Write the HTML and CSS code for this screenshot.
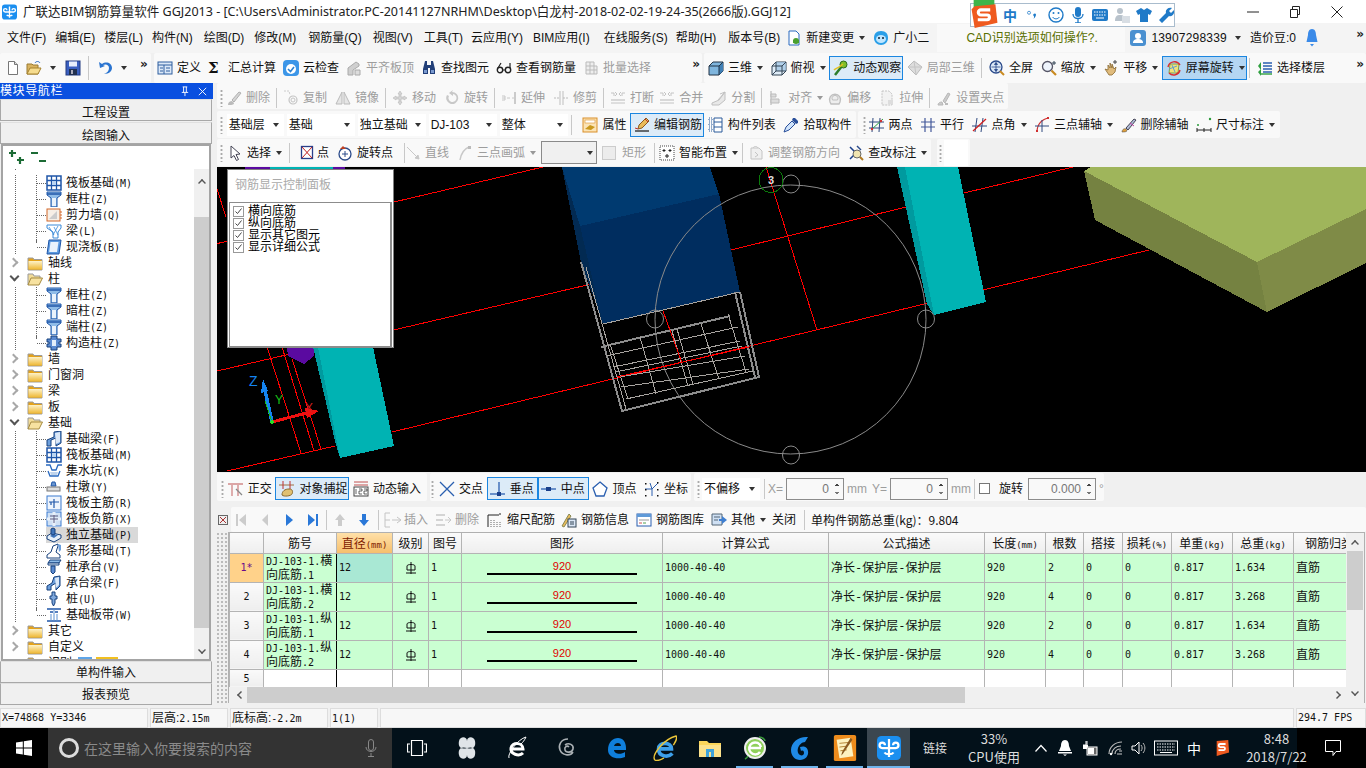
FILE: index.html
```html
<!DOCTYPE html>
<html lang="zh-CN">
<head>
<meta charset="utf-8">
<title>广联达BIM钢筋算量软件 GGJ2013</title>
<link rel="stylesheet" href="styles.css">
</head>
<body>
<svg class="defs" aria-hidden="true">
<defs>
<symbol id="app" viewBox="0 0 16 16"><rect width="16" height="16" rx="3" fill="#1b8ff0"/><path d="M8 2v12M8 8H3.500a1.800 1.800 0 1 1 1.800-1.800M8 8h4.500a1.800 1.800 0 1 0-1.800-1.800M5 11c1 1.500 5 1.500 6 0" fill="none" stroke="#fff" stroke-width="1.500"/></symbol>
<symbol id="new" viewBox="0 0 16 16"><path d="M3.500 1.500h6l3 3v10h-9z" fill="#fff" stroke="#777"/><path d="M9.500 1.500v3h3" fill="#ddd" stroke="#777"/></symbol>
<symbol id="open" viewBox="0 0 16 16"><path d="M1 14V4h5l1 1h5v9z" fill="#d9b360" stroke="#9a7a30"/><path d="M1 14l3-6h11l-3 6z" fill="#f6dc8e" stroke="#a5822f"/><path d="M9 3c1-2 4-2 5 0" fill="none" stroke="#2a6ac0"/></symbol>
<symbol id="save" viewBox="0 0 16 16"><rect x="1" y="1" width="14" height="14" fill="#3a5fc0" stroke="#223a80"/><rect x="4" y="1.500" width="8" height="5" fill="#e8eefc"/><rect x="4" y="9" width="8" height="6" fill="#20304f"/><rect x="6" y="10" width="2" height="4" fill="#aab"/></symbol>
<symbol id="undo" viewBox="0 0 16 16"><path d="M2 2l1 6 5-2-2-1c3-1.500 6 0 6 3s-2 5-5 6c5 0 8-3 8-6 0-5-6-7-10-4z" fill="#2a74d0"/></symbol>
<symbol id="def" viewBox="0 0 16 16"><rect x="1" y="2" width="14" height="12" fill="#dbe8f8" stroke="#2f5f9f"/><path d="M1 5h14M7 5v9M3 8h3M3 11h3M9 8h4M9 11h4" stroke="#2f5f9f"/></symbol>
<symbol id="cloud" viewBox="0 0 16 16"><rect x="0" y="0" width="16" height="16" rx="4" fill="#3c96e8"/><circle cx="8" cy="9" r="5" fill="#fff"/><path d="M5 9l2.500 2.500L11 7" fill="none" stroke="#2a80d0" stroke-width="1.600"/></symbol>
<symbol id="bld" viewBox="0 0 16 16"><path d="M2 15V8l8-6 3 2v2l-6 4v5z" fill="#cfcfcf" stroke="#aaa"/><path d="M9 15v-5h5v5z" fill="#ddd" stroke="#aaa"/></symbol>
<symbol id="binoc" viewBox="0 0 16 16"><path d="M4 1h2v4h4V1h2l2 8v5H9V8H7v6H2V9z" fill="#223f78"/><path d="M3 10h3v3H3zM10 10h3v3h-3z" fill="#7a9ad0"/></symbol>
<symbol id="look" viewBox="0 0 16 16"><circle cx="4" cy="10" r="2.700" fill="none" stroke="#222" stroke-width="1.400"/><circle cx="12" cy="10" r="2.700" fill="none" stroke="#222" stroke-width="1.400"/><path d="M6.500 10h3M2 8l3-5M14 8V3" stroke="#222" stroke-width="1.200" fill="none"/></symbol>
<symbol id="batch" viewBox="0 0 16 16"><path d="M3 2h8v4h3v8H3zM3 6h8M3 10h11M7 2v12M11 6v8" fill="#eee" stroke="#bbb"/></symbol>
<symbol id="cube" viewBox="0 0 16 16"><path d="M1 6l4-4h10v9l-4 4H1z" fill="#7fb5dd" stroke="#234"/><path d="M11 6l4-4v9l-4 4z" fill="#3f7fb5"/><path d="M1 6h10v9M11 6l4-4" fill="none" stroke="#234"/></symbol>
<symbol id="cubef" viewBox="0 0 16 16"><path d="M1 6l4-4h10v9l-4 4H1z" fill="#e0edf8" stroke="#345"/><path d="M5 2h10v9H5z" fill="#9cc3e4" opacity=".7"/><path d="M5 2v9h10M5 11l-4 4M1 6h10v9M11 6l4-4" fill="none" stroke="#345"/></symbol>
<symbol id="orbit" viewBox="0 0 16 16"><path d="M2 15l7-9" stroke="#2d7d2d" stroke-width="2.500"/><circle cx="10.500" cy="4.500" r="3.500" fill="#7fbf2a" stroke="#2d6d1d"/><path d="M1 10c2-2 5-2 9-6" stroke="#e2c020" fill="none" stroke-width="1.500"/></symbol>
<symbol id="loc3" viewBox="0 0 16 16"><path d="M1 7l6-6 8 6-6 8z" fill="#ddd" stroke="#bbb"/><path d="M7 1l2 14M1 7l14 0" stroke="#c4c4c4"/></symbol>
<symbol id="globe" viewBox="0 0 16 16"><circle cx="7" cy="7" r="6" fill="#dbe7f6" stroke="#2a4a8a" stroke-width="1.300"/><path d="M7 2.500v9M2.500 7h9M7 2.500L5.500 4.500h3zM7 11.500L5.500 9.500h3z" stroke="#2a4a8a" fill="#2a4a8a" stroke-width=".8"/><path d="M11 11l4 4" stroke="#c98a20" stroke-width="2"/></symbol>
<symbol id="mag" viewBox="0 0 16 16"><circle cx="6.500" cy="6.500" r="5" fill="#eef4fc" stroke="#556" stroke-width="1.300"/><path d="M10.500 10.500l4.500 4.500" stroke="#c98a20" stroke-width="2.200"/><path d="M13 1v4M11 3h4" stroke="#345"/></symbol>
<symbol id="pan" viewBox="0 0 16 16"><path d="M2 9l3 1V5l2 3V3l2 5V4l2 5 2-2-1 5-3 3H6z" fill="#e0bb7c" stroke="#8a6a30" stroke-width=".8"/><path d="M12 0v4M10 2h4" stroke="#444"/></symbol>
<symbol id="rot" viewBox="0 0 16 16"><path d="M4 4h9l-1 9H3z" fill="#f2e27a" stroke="#7fa04a"/><path d="M3 9l8-3M6 5l3 7" stroke="#5fa0d0"/><path d="M2 7A6.500 6.500 0 0 1 14 5M14 10A6.500 6.500 0 0 1 3 13" fill="none" stroke="#d93030" stroke-width="1.400"/></symbol>
<symbol id="floor" viewBox="0 0 16 16"><path d="M6 3h9M6 6h9M6 9h9M6 12h9" stroke="#2a5fb0" stroke-width="1.400"/><path d="M1 6l3-4v8zM1 12l3-3v7z" fill="#2fa040"/><path d="M4 14h11" stroke="#2fa040" stroke-width="1.400"/></symbol>
<symbol id="brush" viewBox="0 0 16 16"><path d="M2 15c0-3 2-4 4-4l2 2c0 2-3 2-6 2z" fill="#bbb"/><path d="M6 10l7-8 2 1-7 9z" fill="#d5d5d5" stroke="#b0b0b0"/></symbol>
<symbol id="copy" viewBox="0 0 16 16"><circle cx="10" cy="10" r="4" fill="none" stroke="#c4c4c4" stroke-width="1.200"/><circle cx="10" cy="10" r="2" fill="none" stroke="#c4c4c4"/><path d="M1 1h5l1 4" fill="none" stroke="#ccc" stroke-dasharray="2 1"/></symbol>
<symbol id="mirror" viewBox="0 0 16 16"><path d="M7 2L1 14h6zM9 2l6 12H9z" fill="#e6e6e6" stroke="#bbb"/></symbol>
<symbol id="move" viewBox="0 0 16 16"><path d="M8 1l2 3H9v3h3V6l3 2-3 2V9H9v3h1l-2 3-2-3h1V9H4v1L1 8l3-2v1h3V4H6z" fill="#d5d5d5" stroke="#bbb" stroke-width=".6"/></symbol>
<symbol id="rotg" viewBox="0 0 16 16"><path d="M8 2a6 6 0 1 1-5 3l2 1a4 4 0 1 0 4-2v2L5 3l4-3z" fill="#c8c8c8"/></symbol>
<symbol id="ext" viewBox="0 0 16 16"><path d="M14 2v12" stroke="#bbb" stroke-width="1.500"/><path d="M1 8h3M6 8h3M11 8h2M1 6h3v4H1" stroke="#c8c8c8" fill="none"/></symbol>
<symbol id="trim" viewBox="0 0 16 16"><path d="M7 1v14M10 1v14" stroke="#c8c8c8" stroke-width="1.200"/><path d="M1 8h6M10 8h5" stroke="#bbb" stroke-dasharray="2 1"/></symbol>
<symbol id="brk" viewBox="0 0 16 16"><path d="M1 3h3v3M15 3h-3v3M1 13h14M5 2l2 2-2 2M11 2L9 4l2 2" stroke="#c4c4c4" fill="none"/><path d="M1 10h14" stroke="#ccc" stroke-width="1.500"/></symbol>
<symbol id="split" viewBox="0 0 16 16"><path d="M1 13l7-3 6-8v8l-6 5H1z" fill="#e8e8e8" stroke="#c0c0c0"/><path d="M7 10l7-8M9 4l5-2" stroke="#c0c0c0"/></symbol>
<symbol id="aln" viewBox="0 0 16 16"><path d="M3 1v14" stroke="#bbb" stroke-width="1.200"/><path d="M3 4h5v3H3zM3 9h8v4H3z" fill="#ddd" stroke="#bbb"/></symbol>
<symbol id="ofs" viewBox="0 0 16 16"><path d="M3 12a5.500 5.500 0 1 1 10 0l-1 2H4z" fill="#eee" stroke="#c0c0c0" stroke-width="1.400"/><path d="M5.500 10a3 3 0 1 1 5 0z" fill="none" stroke="#c0c0c0"/></symbol>
<symbol id="str" viewBox="0 0 16 16"><path d="M3 1h7l3 3v11H3z" fill="#f2f2f2" stroke="#c4c4c4" stroke-dasharray="2 1"/><path d="M9 10h5v4H9z" fill="#ddd"/></symbol>
<symbol id="grip" viewBox="0 0 16 16"><path d="M2 15c0-2 2-3 4-3l1 3zM7 11l5-8 2 1-5 9z" fill="#ccc" stroke="#b8b8b8"/><rect x="9" y="13" width="3" height="2" fill="#bbb"/></symbol>
<symbol id="prop" viewBox="0 0 16 16"><rect x="1" y="1" width="14" height="14" fill="#fbe3b5" stroke="#d98f2a"/><rect x="3" y="3" width="10" height="3" fill="#fff" stroke="#d98f2a" stroke-width=".6"/><path d="M3 12l5-4 5 2-4 3z" fill="#c9981c"/></symbol>
<symbol id="edit" viewBox="0 0 16 16"><path d="M1 14h14" stroke="#222" stroke-width="1.300"/><path d="M4 12l1-4 7-7 3 3-7 7z" fill="#e9bb5a" stroke="#8b5a20"/><path d="M11 2l3 3" stroke="#c03030"/><path d="M1 11l3 1" stroke="#c03030"/></symbol>
<symbol id="list" viewBox="0 0 16 16"><path d="M1 1h3v3H1zM1 6h3v3H1zM1 11h3v3H1z" fill="#fff" stroke="#2a5a9a" stroke-dasharray="1 1"/><path d="M6 1h8v14H6z" fill="#fff" stroke="#2a5a9a"/><path d="M6 5h8M6 10h8" stroke="#2a5a9a"/></symbol>
<symbol id="pick" viewBox="0 0 16 16"><path d="M1 15l2-5 6-6 3 3-6 6z" fill="#cfe3fa" stroke="#2a4f9a"/><path d="M9 3l1-2 2 0 3 3 0 2-2 1z" fill="#2a4f9a"/></symbol>
<symbol id="twop" viewBox="0 0 16 16"><path d="M4 1l-1 14M11 1l-1 14M0 5h15M0 11h15" stroke="#304a80"/><path d="M2 13L14 2" stroke="#2aa040"/><circle cx="3" cy="12" r="1.200" fill="#d03030"/><circle cx="12" cy="4" r="1.200" fill="#d03030"/></symbol>
<symbol id="para" viewBox="0 0 16 16"><path d="M1 5h14M1 10h14M5 1v14M11 1v14" stroke="#43589a" stroke-width="1.200"/></symbol>
<symbol id="ang" viewBox="0 0 16 16"><path d="M5 1l-2 14M11 1L9 15M0 9h15" stroke="#304a80"/><path d="M1 14L14 2" stroke="#d02020" stroke-width="1.300"/></symbol>
<symbol id="arc3" viewBox="0 0 16 16"><path d="M3 15C3 7 8 2 15 1" fill="none" stroke="#d03030" stroke-width="1.200"/><path d="M8 3v12M1 9h14" stroke="#304a80"/><rect x="13" y="0" width="2" height="2" fill="#d03030"/><rect x="2" y="13" width="2" height="2" fill="#d03030"/></symbol>
<symbol id="delax" viewBox="0 0 16 16"><path d="M1 15c0-3 3-4 4-3l1 2c-1 1-3 1-5 1z" fill="#e0a03c" stroke="#444" stroke-width=".5"/><path d="M5 11l8-9 2 1-8 10z" fill="#b0bcd8" stroke="#445"/><path d="M9 6l4 3" stroke="#c040a0"/></symbol>
<symbol id="dim" viewBox="0 0 16 16"><path d="M1 13h14M1 11v4M15 11v4M8 11v4" stroke="#222"/><circle cx="2" cy="8" r="1" fill="#2a9a3a"/><circle cx="14" cy="2" r="1.200" fill="#2a9a3a"/></symbol>
<symbol id="sel" viewBox="0 0 16 16"><path d="M4 1l9 8-4 .5 2.500 5-2 1-2.500-5L4 13z" fill="#fff" stroke="#445"/></symbol>
<symbol id="pt" viewBox="0 0 16 16"><rect x="1.500" y="1.500" width="11" height="12" fill="#fff" stroke="#2a3f8a" stroke-width="1.300"/><path d="M2 2l10 11M12 2L2 13" stroke="#c02020"/></symbol>
<symbol id="rotp" viewBox="0 0 16 16"><circle cx="8" cy="9" r="6" fill="#fff" stroke="#2a4a8a" stroke-width="1.300"/><path d="M8 6v6M5 9h6" stroke="#2a4a8a"/><path d="M3 4l3-3 3 3z" fill="#c04020"/></symbol>
<symbol id="line" viewBox="0 0 16 16"><path d="M2 2l12 12M14 14l-4-1 3-3z" stroke="#c8c8c8" fill="#c8c8c8"/></symbol>
<symbol id="arc" viewBox="0 0 16 16"><path d="M3 15C4 9 7 4 12 2" fill="none" stroke="#c8c8c8" stroke-width="1.500"/><rect x="11" y="1" width="3" height="3" fill="#bbb"/></symbol>
<symbol id="smart" viewBox="0 0 16 16"><rect x="1" y="1" width="14" height="14" fill="#fff" stroke="#444" stroke-dasharray="1 1"/><path d="M5 4v3M3.500 5.500h3M11 4v3M9.500 5.500h3M8 9v4M6 11h4" stroke="#222"/></symbol>
<symbol id="adj" viewBox="0 0 16 16"><path d="M3 3h8l3 3v8H3z" fill="#f0f0f0" stroke="#c4c4c4"/><path d="M5 3c1-2 4-2 5 0M7 7l3 3-3 2" stroke="#c4c4c4" fill="none"/></symbol>
<symbol id="chk" viewBox="0 0 16 16"><path d="M2 2l5 5M2 14l5-5" stroke="#1a3f8a" stroke-width="1.500"/><circle cx="9" cy="9" r="4" fill="#f0e4b0" stroke="#666"/><path d="M12 12l3 3" stroke="#b07a20" stroke-width="2"/><path d="M9 1l4 4" stroke="#2a4a8a" stroke-width="1.500"/></symbol>
<symbol id="ortho" viewBox="0 0 16 16"><path d="M0 3h15M4 3v12M10 3v12" stroke="#dba5a5" stroke-width="1.800" fill="none"/><path d="M8 8l6 6" stroke="#888" stroke-width="1.300"/></symbol>
<symbol id="snap" viewBox="0 0 16 16"><path d="M0 4h15" stroke="#a07040"/><path d="M4 0v8M11 0v8" stroke="#c03030"/><path d="M3 14c0-4 3-6 7-6s4 3 3 5-8 3-10 1z" fill="#e0c070" stroke="#8a6a30"/></symbol>
<symbol id="dyn" viewBox="0 0 16 16"><path d="M1 1h14M1 4h14" stroke="#c05050"/><rect x="1" y="6" width="14" height="9" fill="#fff" stroke="#444"/><path d="M3 8v5M6 8h3v2H6v3h3M11 8h3v2h-3v3h3" stroke="#222" stroke-width=".7" fill="none"/></symbol>
<symbol id="xpt" viewBox="0 0 16 16"><path d="M1 1l14 14M15 1L1 15" stroke="#2a5fb0" stroke-width="1.300"/></symbol>
<symbol id="perp" viewBox="0 0 16 16"><path d="M9 1v13" stroke="#2a5fb0" stroke-width="1.300"/><path d="M0 13h15" stroke="#2a5fb0" stroke-width="1.300"/><rect x="7" y="11" width="4" height="4" fill="#1a3f8a"/></symbol>
<symbol id="mid" viewBox="0 0 16 16"><path d="M0 8h15" stroke="#2a5fb0" stroke-width="1.300"/><rect x="5" y="6" width="5" height="4" fill="#1a3f8a"/></symbol>
<symbol id="vtx" viewBox="0 0 16 16"><path d="M8 1l7 6-3 8H4L1 7z" fill="#fff" stroke="#2a5fb0" stroke-width="1.300"/></symbol>
<symbol id="coord" viewBox="0 0 16 16"><path d="M6 2l2 6 6-6M8 8v7M8 8H1" stroke="#2a5fb0" fill="none"/><g fill="#111"><rect x="1" y="2" width="1.500" height="1.500"/><rect x="1" y="8" width="1.500" height="1.500"/><rect x="1" y="14" width="1.500" height="1.500"/><rect x="13" y="1" width="1.500" height="1.500"/><rect x="13" y="8" width="1.500" height="1.500"/><rect x="13" y="14" width="1.500" height="1.500"/></g></symbol>
<symbol id="ins" viewBox="0 0 18 16"><path d="M1 1h5M1 1v14M1 8h5M1 15h5" stroke="#c4c4c4" fill="none"/><path d="M8 8h8M13 5l4 3-4 3" stroke="#c4c4c4" fill="none"/></symbol>
<symbol id="del2" viewBox="0 0 18 16"><path d="M1 3h9M1 8h7M1 13h9" stroke="#c8c8c8" stroke-width="1.400"/><path d="M10 8h6M13 5l3 3-3 3" stroke="#c8c8c8" fill="none"/></symbol>
<symbol id="scale" viewBox="0 0 16 16"><path d="M1 3h11M13 1v2M1 15V3" stroke="#222"/><path d="M4 15v-8M7 15V8M10 15V9M13 15v-5" stroke="#666" stroke-dasharray="1 1"/></symbol>
<symbol id="info" viewBox="0 0 16 16"><path d="M1 14l7-12 2 2-7 11z" fill="#e9bb5a" stroke="#885"/><rect x="7" y="7" width="8" height="8" fill="#dbe7f6" stroke="#345"/><path d="M9 10h4M9 12h4" stroke="#345"/></symbol>
<symbol id="lib" viewBox="0 0 16 16"><rect x="1" y="2" width="14" height="12" fill="#fff" stroke="#2a5fb0"/><rect x="1" y="2" width="14" height="3" fill="#5f9ad8"/><path d="M3 8h10" stroke="#999"/><path d="M3 11h3" stroke="#d05050"/><path d="M7 11h3" stroke="#50a050"/></symbol>
<symbol id="other" viewBox="0 0 16 16"><path d="M1 2h10v11H1z" fill="#cfe0f4" stroke="#567"/><path d="M3 5h6M3 8h4" stroke="#567"/><path d="M8 7h3V4l5 4-5 4V9H8z" fill="#3f7fd0"/></symbol>
<symbol id="raft" viewBox="0 0 16 16"><path d="M1 1h14v14H1z" fill="#fff" stroke="#1f56a8" stroke-width="1.500"/><path d="M1 5.500h14M1 10.500h14M5.500 1v14M10.500 1v14" stroke="#1f56a8" stroke-width="1.300"/><path d="M6 6h4v4H6z" fill="#bcd6f2"/></symbol>
<symbol id="col" viewBox="0 0 16 16"><path d="M1 1h14v3l-4 3v9H5V7L1 4z" fill="#8fbce8" stroke="#1f56a8"/><path d="M6 7h4v8H6z" fill="#eaf3fc"/><path d="M1 3h14" stroke="#1f56a8" stroke-width="1.500"/></symbol>
<symbol id="wall" viewBox="0 0 16 16"><rect x="1" y="2" width="13" height="12" fill="#f7efe6" stroke="#d2682a"/><path d="M3 12l8-8v8z" fill="#ccc"/><path d="M14 5h2M14 8h2M14 11h2" stroke="#d2682a"/></symbol>
<symbol id="beam" viewBox="0 0 16 16"><path d="M1 2h14v3l-3 4v6H7V9L1 5z" fill="#fff" stroke="#3a8ad8"/><path d="M3 4l5 8M8 4l4 8M12 3l-5 9" stroke="#3a8ad8" stroke-width=".8"/></symbol>
<symbol id="slab" viewBox="0 0 16 16"><path d="M3 1h12l-2 14H1z" fill="#5d9ae0" stroke="#1f56a8"/><path d="M4.500 3h8L11 13H3.200z" fill="#e9f2fc"/></symbol>
<symbol id="gzz" viewBox="0 0 16 16"><path d="M5 1h6v3h4v3h-2v2h2v3h-4v3H5v-3H1V9h2V7H1V4h4z" fill="#5b8ad0" stroke="#17407c"/><path d="M6 5h4v6H6z" fill="#e3eefa"/></symbol>
<symbol id="fbeam" viewBox="0 0 16 16"><path d="M1 15V9l7-3V1l7-1v12l-5 3V7L5 9v6z" fill="#6c9fdc" stroke="#17407c"/><path d="M9 2l5-1v10l-4 2z" fill="#dbe8f8"/></symbol>
<symbol id="pit" viewBox="0 0 16 16"><path d="M0 2h4l2 5h4l2-5h4M2 8l2 5h8l2-5" fill="none" stroke="#2a6ac0" stroke-width="1.300"/><path d="M4 9h8l-1 3H5z" fill="#c0d4ec"/></symbol>
<symbol id="pier" viewBox="0 0 16 16"><path d="M5 7l1-4h3l1 4z" fill="#6a96d0" stroke="#1f56a8"/><rect x="1" y="8" width="13" height="4" fill="#ddd" stroke="#777"/></symbol>
<symbol id="mbar" viewBox="0 0 16 16"><rect x="1" y="1" width="14" height="14" fill="#eef4fc" stroke="#3a7ad0"/><path d="M3 7h10M8 4v9M5 7v3" stroke="#1f56a8" stroke-width="1.200" fill="none"/></symbol>
<symbol id="nbar" viewBox="0 0 16 16"><rect x="1" y="1" width="14" height="14" fill="#cfe0f4" stroke="#3a7ad0"/><path d="M1 8h14M8 1v14" stroke="#e8f0fa" stroke-width="3"/><path d="M4 5h8M4 8h8M8 4v8" stroke="#5a5a80"/></symbol>
<symbol id="iso" viewBox="0 0 16 16"><path d="M1 9l5-3 9 2v3l-7 4-7-3z" fill="#e5eff9" stroke="#17407c"/><path d="M4 9l3-2 5 1-4 3z" fill="#3f75bb"/><path d="M5 7V2l2-1 2 1v5l-2 1z" fill="#3f75bb" stroke="#17407c"/></symbol>
<symbol id="strip" viewBox="0 0 16 16"><path d="M1 15v-3l4-3 2-6 5-2v2l-2 6 4 3v3z" fill="#fff" stroke="#17407c"/><path d="M12 1l3 1v5l-2 2z" fill="#6c9fdc"/></symbol>
<symbol id="capt" viewBox="0 0 16 16"><path d="M2 4l2-3h11l-2 3z" fill="#8fbce8" stroke="#17407c"/><path d="M2 4h11v2H2z" fill="#eaf3fc" stroke="#17407c"/><path d="M5 7h4v6l-2 2-2-2z" fill="#5b8ad0" stroke="#17407c"/></symbol>
<symbol id="capb" viewBox="0 0 16 16"><path d="M1 15v-4l5-3 2-6 6-1v10l-4 4V8L5 11v4z" fill="#6c9fdc" stroke="#17407c"/><path d="M9 3l4-1v8l-3 3z" fill="#dbe8f8"/></symbol>
<symbol id="pile" viewBox="0 0 16 16"><path d="M6 1h3v4h2v3H9v4l-1.500 3L6 12V8H4V5h2z" fill="#7fa8dc" stroke="#17407c"/></symbol>
<symbol id="band" viewBox="0 0 16 16"><path d="M1 2h14M1 14h14M4 5h3M9 5h3" stroke="#1f56a8" stroke-width="1.400"/><path d="M8 2v12M5 7v7M11 7v7" stroke="#5a90d0"/></symbol>
<symbol id="fold" viewBox="0 0 16 16"><path d="M1 3h5l1 1.500h8V15H1z" fill="#e4a21a" stroke="#9c9c9c"/><path d="M1.500 6h13.500v8.500H1.500z" fill="url(#fg)"/></symbol>
<symbol id="foldo" viewBox="0 0 16 16"><path d="M1 14V3h5l1 2h6v2" fill="#f2dc98" stroke="#999"/><path d="M1 14l3-7h11.500L12 14z" fill="#f7e2a0" stroke="#a58a40"/></symbol>
<symbol id="tick" viewBox="0 0 11 11"><rect x=".5" y=".5" width="10" height="10" fill="#fff" stroke="#999"/><path d="M2.500 5.500l2 2 4-5" fill="none" stroke="#444"/></symbol>
<symbol id="grade" viewBox="0 0 10 12"><path d="M5 0v12M1 4v4h8V4M1 4c0-2 8-2 8 0M0 11h10" fill="none" stroke="#111"/></symbol>
<linearGradient id="fg" x1="0" y1="0" x2="0" y2="1"><stop offset="0" stop-color="#fdf2c8"/><stop offset="1" stop-color="#eeb733"/></linearGradient>
</defs>
</svg>

<div class="app">
  <header class="titlebar">
    <svg class="appicon"><use href="#app"/></svg>
    <span class="title">广联达BIM钢筋算量软件 GGJ2013 - [C:\Users\Administrator.PC-20141127NRHM\Desktop\白龙村-2018-02-02-19-24-35(2666版).GGJ12]</span>
    <div class="winbtns">
      <svg class="wb" viewBox="0 0 12 12"><path d="M0 6h12" stroke="#222"/></svg>
      <svg class="wb" viewBox="0 0 12 12"><path d="M1.500 3.500h7v8h-7zM3.500 3V.5h7v8H9" fill="none" stroke="#222"/></svg>
      <svg class="wb" viewBox="0 0 12 12"><path d="M.5.500l11 11M11.500.500l-11 11" stroke="#222"/></svg>
    </div>
  </header>
  <div class="ime">
    <svg class="imes" viewBox="0 0 26 28"><rect x="3" y="0" width="20" height="8" fill="#3eb54a"/><path d="M4 6l20-2 2 18-22 5-3-18z" fill="#ef5a1f"/><path d="M19 9.500H10a1.500 1.500 0 0 0 0 5h6a2 2 0 0 1 0 4.500H7" fill="none" stroke="#fff" stroke-width="3"/></svg>
    <span class="imez">中</span>
    <svg class="imei p1" viewBox="0 0 16 16"><circle cx="4" cy="5" r="2" fill="none" stroke="#1f7ac8"/><path d="M12 6c2 0 2 4-2 7 1-2 1-3 0-4s0-3 2-3z" fill="#1f7ac8"/></svg>
    <svg class="imei" viewBox="0 0 16 16"><circle cx="8" cy="8" r="7" fill="none" stroke="#1f7ac8" stroke-width="1.400"/><circle cx="5.500" cy="6" r="1" fill="#1f7ac8"/><circle cx="10.500" cy="6" r="1" fill="#1f7ac8"/><path d="M4.500 10c2 2.500 5 2.500 7 0" fill="none" stroke="#1f7ac8"/></svg>
    <svg class="imei" viewBox="0 0 16 16"><rect x="5" y="0" width="6" height="10" rx="3" fill="#1f7ac8"/><path d="M3 7c0 6 10 6 10 0M8 12v4M5 16h6" fill="none" stroke="#1f7ac8" stroke-width="1.300"/></svg>
    <svg class="imei" viewBox="0 0 16 16"><rect x="0" y="2" width="16" height="12" rx="2" fill="#1f7ac8"/><path d="M2 5h12M2 8h12" stroke="#fff" stroke-dasharray="1.500 1"/><path d="M4 11h8" stroke="#fff"/></svg>
    <svg class="imei" viewBox="0 0 16 16"><circle cx="6" cy="4" r="3" fill="#b9c3cc"/><path d="M1 14c0-5 2-6 5-6s5 1 5 6z" fill="#b9c3cc"/><rect x="8" y="9" width="8" height="7" fill="#d8dee4"/></svg>
    <svg class="imei" viewBox="0 0 16 16"><path d="M5 1l3 2 3-2 5 3-2 4-2-1v8H4V7L2 8 0 4z" fill="#1f7ac8"/></svg>
    <svg class="imei" viewBox="0 0 16 16"><path d="M1 13l7-7c-1-3 2-6 6-5l-3 3 2 2 3-3c1 4-2 7-5 6l-7 7z" fill="#1f7ac8"/></svg>
  </div>

  <nav class="menubar">
    <span class="mi">文件(F)</span><span class="mi">编辑(E)</span><span class="mi">楼层(L)</span><span class="mi">构件(N)</span><span class="mi">绘图(D)</span><span class="mi">修改(M)</span><span class="mi">钢筋量(Q)</span><span class="mi">视图(V)</span><span class="mi">工具(T)</span><span class="mi">云应用(Y)</span><span class="mi">BIM应用(I)</span><span class="mi">在线服务(S)</span><span class="mi">帮助(H)</span><span class="mi">版本号(B)</span>
    <span class="ti news"><svg class="i" viewBox="0 0 16 16"><path d="M3 1h7l3 3v11H3z" fill="#fff" stroke="#2a6ac0"/><path d="M7 10h6v3h-6z" fill="#4aa030"/><circle cx="10" cy="11" r="3" fill="#4aa030"/></svg>新建变更<i class="ar"></i></span>
    <span class="ti guang"><svg class="i" viewBox="0 0 16 16"><path d="M8 1c5 0 7 3 7 7s-3 7-7 7-7-3-7-7 2-7 7-7z" fill="#2a9fe8"/><ellipse cx="8" cy="9" rx="5" ry="4" fill="#bfe6ff"/><circle cx="6" cy="8" r="1" fill="#123"/><circle cx="10" cy="8" r="1" fill="#123"/></svg>广小二</span>
    <span class="cadtip">CAD识别选项如何操作?.</span>
    <span class="ti user"><svg class="i" viewBox="0 0 16 16"><rect width="16" height="16" rx="3" fill="#4a90d0"/><circle cx="8" cy="6" r="3" fill="#fff"/><path d="M3 13c0-3 2-4 5-4s5 1 5 4z" fill="#fff"/></svg><span class="phone">13907298339</span><i class="ar"></i></span>
    <span class="bean">造价豆:0</span>
    <svg class="bell" viewBox="0 0 12 18"><path d="M6 0c3 0 4 3 4 6l1.500 7H.5L2 6c0-3 1-6 4-6z" fill="#3a8ae8"/><path d="M4 15h4l-2 2.500z" fill="#3a8ae8"/></svg>
    <b class="more">»</b>
  </nav>

  <div class="tb1">
    <div class="grp g1">
      <svg class="i"><use href="#new"/></svg><svg class="i"><use href="#open"/></svg><i class="ar"></i><svg class="i"><use href="#save"/></svg><i class="sep"></i><svg class="i"><use href="#undo"/></svg><i class="ar"></i><b class="more m1">»</b>
    </div>
    <div class="grp g2">
      <span class="ti"><svg class="i"><use href="#def"/></svg>定义</span>
      <span class="ti"><span class="i sigma">Σ</span>汇总计算</span>
      <span class="ti"><svg class="i"><use href="#cloud"/></svg>云检查</span>
      <span class="ti d"><svg class="i"><use href="#bld"/></svg>平齐板顶</span>
      <span class="ti"><svg class="i"><use href="#binoc"/></svg>查找图元</span>
      <span class="ti"><svg class="i"><use href="#look"/></svg>查看钢筋量</span>
      <span class="ti d"><svg class="i"><use href="#batch"/></svg>批量选择</span>
      <b class="more m2">»</b>
    </div>
    <div class="grp g3">
      <span class="ti"><svg class="i"><use href="#cube"/></svg>三维<i class="ar"></i></span>
      <span class="ti"><svg class="i"><use href="#cubef"/></svg>俯视<i class="ar"></i></span>
      <span class="ti on"><svg class="i"><use href="#orbit"/></svg>动态观察</span>
      <span class="ti d"><svg class="i"><use href="#loc3"/></svg>局部三维</span>
      <i class="sep"></i>
      <span class="ti"><svg class="i"><use href="#globe"/></svg>全屏</span>
      <span class="ti"><svg class="i"><use href="#mag"/></svg>缩放<i class="ar"></i></span>
      <span class="ti"><svg class="i"><use href="#pan"/></svg>平移<i class="ar"></i></span>
      <span class="ti on strong"><svg class="i"><use href="#rot"/></svg>屏幕旋转<i class="ar"></i></span>
      <i class="sep"></i>
      <span class="ti"><svg class="i"><use href="#floor"/></svg>选择楼层</span>
      <b class="more m3">»</b>
    </div>
  </div>

  <div class="workspace">
    <aside class="nav">
      <div class="navhead"><span class="navtitle">模块导航栏</span>
        <svg class="navbtn" viewBox="0 0 12 12"><path d="M4 1h5M5 1v6M8 1v6M3 7h7M6.500 7v4" stroke="#fff" fill="none"/></svg>
        <svg class="navbtn" viewBox="0 0 12 12"><path d="M2 2l8 8M10 2l-8 8" stroke="#fff"/></svg>
      </div>
      <button class="navb nt">工程设置</button>
      <button class="navb nt n2">绘图输入</button>
      <div class="treebox">
        <div class="treetools">
          <svg class="tt" viewBox="0 0 18 16"><path d="M4 1v7M1 4h7M12 8v7M9 11h7" stroke="#1c6b35" stroke-width="2.200"/></svg>
          <svg class="tt" viewBox="0 0 18 16"><path d="M1 4h7M9 12h7" stroke="#1c6b35" stroke-width="2.200"/></svg>
        </div>
        <div class="treebody">
          <ul class="tree">
            <li class="c"><svg class="ti16"><use href="#raft"/></svg>筏板基础<b>(M)</b></li>
            <li class="c"><svg class="ti16"><use href="#col"/></svg>框柱<b>(Z)</b></li>
            <li class="c"><svg class="ti16"><use href="#wall"/></svg>剪力墙<b>(Q)</b></li>
            <li class="c"><svg class="ti16"><use href="#beam"/></svg>梁<b>(L)</b></li>
            <li class="c last"><svg class="ti16"><use href="#slab"/></svg>现浇板<b>(B)</b></li>
            <li class="r"><i class="chev"></i><svg class="ti16"><use href="#fold"/></svg>轴线</li>
            <li class="r o"><i class="chev"></i><svg class="ti16"><use href="#foldo"/></svg>柱</li>
            <li class="c"><svg class="ti16"><use href="#col"/></svg>框柱<b>(Z)</b></li>
            <li class="c"><svg class="ti16"><use href="#col"/></svg>暗柱<b>(Z)</b></li>
            <li class="c"><svg class="ti16"><use href="#col"/></svg>端柱<b>(Z)</b></li>
            <li class="c last"><svg class="ti16"><use href="#gzz"/></svg>构造柱<b>(Z)</b></li>
            <li class="r"><i class="chev"></i><svg class="ti16"><use href="#fold"/></svg>墙</li>
            <li class="r"><i class="chev"></i><svg class="ti16"><use href="#fold"/></svg>门窗洞</li>
            <li class="r"><i class="chev"></i><svg class="ti16"><use href="#fold"/></svg>梁</li>
            <li class="r"><i class="chev"></i><svg class="ti16"><use href="#fold"/></svg>板</li>
            <li class="r o"><i class="chev"></i><svg class="ti16"><use href="#foldo"/></svg>基础</li>
            <li class="c"><svg class="ti16"><use href="#fbeam"/></svg>基础梁<b>(F)</b></li>
            <li class="c"><svg class="ti16"><use href="#raft"/></svg>筏板基础<b>(M)</b></li>
            <li class="c"><svg class="ti16"><use href="#pit"/></svg>集水坑<b>(K)</b></li>
            <li class="c"><svg class="ti16"><use href="#pier"/></svg>柱墩<b>(Y)</b></li>
            <li class="c"><svg class="ti16"><use href="#mbar"/></svg>筏板主筋<b>(R)</b></li>
            <li class="c"><svg class="ti16"><use href="#nbar"/></svg>筏板负筋<b>(X)</b></li>
            <li class="c sel"><svg class="ti16"><use href="#iso"/></svg><span class="st">独立基础<b>(P)</b></span></li>
            <li class="c"><svg class="ti16"><use href="#strip"/></svg>条形基础<b>(T)</b></li>
            <li class="c"><svg class="ti16"><use href="#capt"/></svg>桩承台<b>(V)</b></li>
            <li class="c"><svg class="ti16"><use href="#capb"/></svg>承台梁<b>(F)</b></li>
            <li class="c"><svg class="ti16"><use href="#pile"/></svg>桩<b>(U)</b></li>
            <li class="c last"><svg class="ti16"><use href="#band"/></svg>基础板带<b>(W)</b></li>
            <li class="r"><i class="chev"></i><svg class="ti16"><use href="#fold"/></svg>其它</li>
            <li class="r"><i class="chev"></i><svg class="ti16"><use href="#fold"/></svg>自定义</li>
            <li class="r rx"><svg class="ti16"><use href="#fold"/></svg>识别<i class="mini mb"></i><i class="mini my"></i></li>
          </ul>
          <div class="vs treevs"><i class="up"></i><i class="thumb"></i><i class="dn"></i></div>
        </div>
      </div>
      <button class="navb">单构件输入</button>
      <button class="navb">报表预览</button>
    </aside>

    <main class="main">
      <div class="tb tb2 grp">
        <i class="gr"></i>
        <span class="ti d"><svg class="i"><use href="#brush"/></svg>删除</span><i class="sep"></i>
        <span class="ti d"><svg class="i"><use href="#copy"/></svg>复制</span>
        <span class="ti d"><svg class="i"><use href="#mirror"/></svg>镜像</span><i class="sep"></i>
        <span class="ti d"><svg class="i"><use href="#move"/></svg>移动</span>
        <span class="ti d"><svg class="i"><use href="#rotg"/></svg>旋转</span><i class="sep"></i>
        <span class="ti d"><svg class="i"><use href="#ext"/></svg>延伸</span>
        <span class="ti d"><svg class="i"><use href="#trim"/></svg>修剪</span><i class="sep"></i>
        <span class="ti d"><svg class="i"><use href="#brk"/></svg>打断</span>
        <span class="ti d back3"><svg class="i"><use href="#brk"/></svg>合并</span>
        <span class="ti d"><svg class="i"><use href="#split"/></svg>分割</span><i class="sep"></i>
        <span class="ti d"><svg class="i"><use href="#aln"/></svg>对齐<i class="ar"></i></span>
        <span class="ti d back4"><svg class="i"><use href="#ofs"/></svg>偏移</span>
        <span class="ti d"><svg class="i"><use href="#str"/></svg>拉伸</span><i class="sep"></i>
        <span class="ti d"><svg class="i"><use href="#grip"/></svg>设置夹点</span>
      </div>

      <div class="tbrow r3">
        <div class="grp tb g31">
          <i class="gr"></i>
          <span class="combo c1">基础层<i class="ar"></i></span>
          <span class="combo">基础<i class="ar"></i></span>
          <span class="combo">独立基础<i class="ar"></i></span>
          <span class="combo">DJ-103<i class="ar"></i></span>
          <span class="combo">整体<i class="ar"></i></span>
          <i class="sep"></i>
          <span class="ti"><svg class="i"><use href="#prop"/></svg>属性</span>
          <span class="ti on"><svg class="i"><use href="#edit"/></svg>编辑钢筋</span>
          <span class="ti"><svg class="i"><use href="#list"/></svg>构件列表</span>
          <span class="ti"><svg class="i"><use href="#pick"/></svg>拾取构件</span>
        </div>
        <div class="grp tb g32">
          <i class="gr"></i>
          <span class="ti"><svg class="i"><use href="#twop"/></svg>两点</span>
          <span class="ti"><svg class="i"><use href="#para"/></svg>平行</span>
          <span class="ti"><svg class="i"><use href="#ang"/></svg>点角<i class="ar"></i></span>
          <span class="ti"><svg class="i"><use href="#arc3"/></svg>三点辅轴<i class="ar"></i></span>
          <span class="ti"><svg class="i"><use href="#delax"/></svg>删除辅轴</span>
          <span class="ti"><svg class="i"><use href="#dim"/></svg>尺寸标注<i class="ar"></i></span>
        </div>
      </div>

      <div class="tbrow r4">
        <div class="grp tb g41">
          <i class="gr"></i>
          <span class="ti"><svg class="i"><use href="#sel"/></svg>选择<i class="ar"></i></span><i class="sep"></i>
          <span class="ti s2"><svg class="i"><use href="#pt"/></svg>点</span>
          <span class="ti"><svg class="i"><use href="#rotp"/></svg>旋转点</span><i class="sep sb"></i>
          <span class="ti d"><svg class="i"><use href="#line"/></svg>直线</span>
          <span class="ti d"><svg class="i"><use href="#arc"/></svg>三点画弧<i class="ar"></i></span>
          <span class="combo c3"><i class="ar"></i></span>
          <span class="ti d"><i class="i rect"></i>矩形</span><i class="sep sc1"></i>
          <span class="ti"><svg class="i"><use href="#smart"/></svg>智能布置<i class="ar"></i></span><i class="sep sd"></i>
          <span class="ti d"><svg class="i"><use href="#adj"/></svg>调整钢筋方向</span>
          <span class="ti"><svg class="i"><use href="#chk"/></svg>查改标注<i class="ar"></i></span>
        </div>
        <div class="grp tb g42"><i class="gr"></i><span class="blank"></span></div>
      </div>

      <section class="canvas">
        <svg class="scene" viewBox="217 168 1149 305">
          <g class="red">
            <path d="M217 244.600L543 168"/>
            <path d="M217 372L600 283M731 251L906 208M964 194L1073 168"/>
            <path d="M227 472L335 447M392 433L1149 251"/>
            <path d="M766 168L817 331M663 312L682 364"/>
            <path d="M217 190L226 218M267 348L301 454M282 348L314 452M292 360L321 450"/>
          </g>
          <rect x="245" y="168" width="100" height="2" fill="#5a0aa0"/>
          <rect x="270" y="168" width="63" height="2" fill="#00b3b3"/>
          <path d="M287 348h27v9l-10 8-16-8z" fill="#5a0aa0"/>
          <path d="M313 348h60l21 99-54 12-5-17z" fill="#00b3b3"/>
          <path d="M313 348h5l22 111-5-17z" fill="#009a9f"/>
          <path d="M562 168l19 95 22 62 137-32-21-98-9-27z" fill="#002d5f"/>
          <path d="M562 168h148l9 27-139 32z" fill="#003a70"/>
          <path d="M562 168l18 59 23 98-22-62z" fill="#022a52"/>
          <path d="M897 168h61l28 135-52 13-7-11z" fill="#00b3b3"/>
          <path d="M897 168h8l29 148-7-11z" fill="#009a9f"/>
          <path d="M1084 172l7-4h275v42l-109 53z" fill="#9fb55b"/>
          <path d="M1084 172l173 91 10 50-172-92z" fill="#758241"/>
          <path d="M1257 263l109-53v54l-99 49z" fill="#7f8b47"/>
          <g class="cir">
            <ellipse cx="790.500" cy="320.500" rx="135.500" ry="134.500"/>
            <ellipse cx="791" cy="185" rx="8.500" ry="9"/>
            <ellipse cx="655" cy="320" rx="8.500" ry="9"/>
            <ellipse cx="926" cy="320" rx="8.500" ry="9"/>
            <ellipse cx="791" cy="456" rx="8.500" ry="9"/>
          </g>
          <ellipse cx="771" cy="181" rx="12" ry="12.500" fill="none" stroke="#0a7a0a"/>
          <text class="axis3" x="771" y="185">3</text>
          <g class="rebar thick">
            <path d="M581 263L622 412L759 378L740 293"/>
            <path d="M601 348L730 317"/>
            <path d="M735 293L755 378"/>
          </g>
          <g class="rebar">
            <path d="M603 325L740 293M586 268L626 410"/>
            <path d="M606 357L738 328M613 368L740 342M615 373L742 347M619 378L745 357M621 388L749 370M626 400L753 372"/>
            <path d="M610 345L628 400M640 338L656 395M672 332L688 387M677 330L693 385M701 325L719 380M728 315L746 373"/>
          </g>
          <path class="red" d="M663 312L682 364M617 378L749 348"/>
          <path d="M272 423L264 387" stroke="#1484f0" stroke-width="3.500"/>
          <path d="M263 380l5 12-7 2z" fill="#1484f0"/>
          <path d="M272 423L310 413" stroke="#f01010" stroke-width="3"/>
          <path d="M319 412l-12 7-2-10z" fill="#f01010"/>
          <path d="M272 423L265 402" stroke="#18c018"/>
          <circle cx="272" cy="423" r="1.800" fill="#28e028"/>
          <text class="ax axz" x="249" y="387">Z</text>
          <text class="ax axy" x="275" y="405">Y</text>
          <text class="ax axx" x="305" y="413">X</text>
        </svg>
        <div class="panel">
          <div class="paneltitle">钢筋显示控制面板</div>
          <ul class="panellist">
            <li><svg class="cb"><use href="#tick"/></svg>横向底筋</li>
            <li><svg class="cb"><use href="#tick"/></svg>纵向底筋</li>
            <li><svg class="cb"><use href="#tick"/></svg>显示其它图元</li>
            <li><svg class="cb"><use href="#tick"/></svg>显示详细公式</li>
          </ul>
        </div>
      </section>

      <div class="tbrow r5">
        <div class="grp tb g51">
          <i class="gr"></i>
          <span class="ti"><svg class="i"><use href="#ortho"/></svg>正交</span>
          <span class="ti on"><svg class="i"><use href="#snap"/></svg>对象捕捉</span>
          <span class="ti"><svg class="i"><use href="#dyn"/></svg>动态输入</span>
        </div>
        <div class="grp tb g52">
          <i class="gr"></i>
          <span class="ti"><svg class="i"><use href="#xpt"/></svg>交点</span>
          <span class="ti on pnt"><svg class="i"><use href="#perp"/></svg>垂点</span>
          <span class="ti on pnt"><svg class="i"><use href="#mid"/></svg>中点</span>
          <span class="ti"><svg class="i"><use href="#vtx"/></svg>顶点</span>
          <span class="ti"><svg class="i"><use href="#coord"/></svg>坐标</span>
        </div>
        <div class="grp tb g53">
          <i class="gr"></i>
          <span class="combo c4">不偏移<i class="ar"></i></span>
          <i class="sep"></i>
          <span class="lb d">X=</span><span class="spin"><span>0</span><i class="sp"></i></span><span class="lb d mm">mm</span>
          <span class="lb d">Y=</span><span class="spin"><span>0</span><i class="sp"></i></span><span class="lb d mm">mm</span>
          <i class="sep"></i>
          <i class="box"></i><span class="lb rotl">旋转</span>
          <span class="spin wide"><span>0.000</span><i class="sp"></i></span><span class="lb d">°</span>
        </div>
      </div>

      <div class="rebar-tb">
        <div class="x-strip"><svg class="xs" viewBox="0 0 10 10"><rect x=".5" y=".5" width="9" height="9" fill="#eee" stroke="#666"/><path d="M2 2l6 6M8 2L2 8" stroke="#a33"/></svg></div>
        <div class="grp tb g6">
          <svg class="pg" viewBox="0 0 12 14"><path d="M1 1h2v12H1zM11 1v12L4 7z" fill="#ccc"/></svg>
          <svg class="pg" viewBox="0 0 12 14"><path d="M9 1v12L3 7z" fill="#ccc"/></svg>
          <svg class="pg" viewBox="0 0 12 14"><path d="M3 1v12l7-6z" fill="#2a78d8"/></svg>
          <svg class="pg" viewBox="0 0 12 14"><path d="M1 1v12l7-6zM9 1h2v12H9z" fill="#2a78d8"/></svg>
          <i class="sep s61"></i>
          <svg class="pg" viewBox="0 0 12 14"><path d="M6 1l5 6H8v6H4V7H1z" fill="#ccc"/></svg>
          <svg class="pg" viewBox="0 0 12 14"><path d="M6 13l5-6H8V1H4v6H1z" fill="#2a78d8"/></svg>
          <i class="sep s62"></i>
          <span class="ti d tight"><svg class="i ii"><use href="#ins"/></svg>插入</span>
          <span class="ti d tight back1"><svg class="i ii"><use href="#del2"/></svg>删除</span>
          <span class="ti"><svg class="i"><use href="#scale"/></svg>缩尺配筋</span>
          <span class="ti back2"><svg class="i"><use href="#info"/></svg>钢筋信息</span>
          <span class="ti back1"><svg class="i"><use href="#lib"/></svg>钢筋图库</span>
          <span class="ti back1"><svg class="i"><use href="#other"/></svg>其他<i class="ar"></i></span>
          <span class="ti back2">关闭</span>
          <i class="sep s63"></i>
          <span class="total">单构件钢筋总重(kg)：9.804</span>
        </div>
      </div>

      <div class="gridarea">
        <div class="dots"></div>
        <div class="gridbox">
          <div class="gridclip">
          <table class="rt">
            <colgroup>
              <col class="w34"><col class="w73"><col class="w56"><col class="w36"><col class="w33"><col class="w201"><col class="w166"><col class="w156"><col class="w61"><col class="w38"><col class="w39"><col class="w49"><col class="w61"><col class="w61"><col class="w53">
            </colgroup>
            <thead>
              <tr>
                <th></th><th>筋号</th><th class="hsel">直径<small>(mm)</small></th><th>级别</th><th>图号</th><th>图形</th><th>计算公式</th><th>公式描述</th><th>长度<small>(mm)</small></th><th>根数</th><th>搭接</th><th>损耗<small>(%)</small></th><th>单重<small>(kg)</small></th><th>总重<small>(kg)</small></th><th class="cut"><div class="cutin">钢筋归类</div></th>
              </tr>
            </thead>
            <tbody>
              <tr>
                <th class="rn rsel">1*</th><td class="nm"><span class="m">DJ-103-1.</span>横向底筋<span class="m">.1</span></td><td class="m cursel">12</td><td class="ct"><svg class="gr3"><use href="#grade"/></svg></td><td class="m">1</td><td class="shape"><span>920</span></td><td class="m">1000-40-40</td><td class="fx">净长-保护层-保护层</td><td class="m">920</td><td class="m">2</td><td class="m">0</td><td class="m">0</td><td class="m">0.817</td><td class="m">1.634</td><td>直筋</td>
              </tr>
              <tr>
                <th class="rn">2</th><td class="nm"><span class="m">DJ-103-1.</span>横向底筋<span class="m">.2</span></td><td class="m">12</td><td class="ct"><svg class="gr3"><use href="#grade"/></svg></td><td class="m">1</td><td class="shape"><span>920</span></td><td class="m">1000-40-40</td><td class="fx">净长-保护层-保护层</td><td class="m">920</td><td class="m">4</td><td class="m">0</td><td class="m">0</td><td class="m">0.817</td><td class="m">3.268</td><td>直筋</td>
              </tr>
              <tr>
                <th class="rn">3</th><td class="nm"><span class="m">DJ-103-1.</span>纵向底筋<span class="m">.1</span></td><td class="m">12</td><td class="ct"><svg class="gr3"><use href="#grade"/></svg></td><td class="m">1</td><td class="shape"><span>920</span></td><td class="m">1000-40-40</td><td class="fx">净长-保护层-保护层</td><td class="m">920</td><td class="m">2</td><td class="m">0</td><td class="m">0</td><td class="m">0.817</td><td class="m">1.634</td><td>直筋</td>
              </tr>
              <tr>
                <th class="rn">4</th><td class="nm"><span class="m">DJ-103-1.</span>纵向底筋<span class="m">.2</span></td><td class="m">12</td><td class="ct"><svg class="gr3"><use href="#grade"/></svg></td><td class="m">1</td><td class="shape"><span>920</span></td><td class="m">1000-40-40</td><td class="fx">净长-保护层-保护层</td><td class="m">920</td><td class="m">4</td><td class="m">0</td><td class="m">0</td><td class="m">0.817</td><td class="m">3.268</td><td>直筋</td>
              </tr>
              <tr class="empty">
                <th class="rn">5</th><td class="nm"></td><td></td><td></td><td></td><td></td><td></td><td></td><td></td><td></td><td></td><td></td><td></td><td></td><td></td>
              </tr>
            </tbody>
          </table>
          </div>
          <div class="vs gridvs"><i class="up"></i><i class="thumb"></i><i class="dn"></i></div>
          <div class="hs"><i class="lf"></i><i class="thumb"></i><i class="rg"></i></div>
        </div>
      </div>
    </main>
  </div>

  <footer class="status">
    <span class="sc s1c">X=74868 Y=3346</span>
    <span class="sc s2c">层高:<em>2.15m</em></span>
    <span class="sc s3c">底标高:<em>-2.2m</em></span>
    <span class="sc s4c"><em>1(1)</em></span>
    <span class="sc s5c"></span>
    <span class="sc s6c">294.7 FPS</span>
  </footer>

  <div class="taskbar">
    <div class="start"><svg class="win" viewBox="0 0 16 16"><path d="M0 2.500L6.800 1.500v6H0zM7.800 1.300L16 0v7.500H7.800zM0 8.500h6.800v6L0 13.500zM7.800 8.500H16V16l-8.200-1.300z" fill="#fff"/></svg></div>
    <div class="search"><i class="cortana"></i><span class="ph">在这里输入你要搜索的内容</span>
      <svg class="mic" viewBox="0 0 12 18"><rect x="3.500" y=".5" width="5" height="11" rx="2.500" fill="none" stroke="#888"/><path d="M1 8c0 6 10 6 10 0M6 14v3M3 17.500h6" fill="none" stroke="#888"/></svg>
    </div>
    <span class="ts tw"><svg class="t1" viewBox="0 0 20 18"><path d="M4.500 1.500h11v15h-11zM3 5H.5v8H3M17 5h2.500v8H17" fill="none" stroke="#fff" stroke-width="1.200"/></svg></span>
    <span class="ts tw"><svg class="t2" viewBox="0 0 22 24"><path d="M11 12C4 14 2 10 3 5s8-5 8 0zM11 12c7 2 9-2 8-7s-8-5-8 0zM11 12c-7-2-9 2-8 7s8 5 8 0zM11 12c7-2 9 2 8 7s-8 5-8 0z" fill="#dfe4e8"/></svg></span>
    <span class="ts tw"><svg class="t2" viewBox="0 0 22 24"><path d="M4 13h13c0-7-11-7-12-1s8 9 12 5" fill="none" stroke="#fff" stroke-width="3"/><path d="M3 22C1 18 12 3 20 1c-2 4-3 5-5 7" fill="none" stroke="#fff"/></svg></span>
    <span class="ts tw"><svg class="t2" viewBox="0 0 22 24"><path d="M12 3c-7 0-10 6-8 11s10 7 13 2M9 9c4-3 9 0 8 4s-7 4-8 1 2-5 4-3" fill="none" stroke="#aab0b4" stroke-width="1.600"/></svg></span>
    <span class="ts tw"><svg class="t2" viewBox="0 0 22 24"><path d="M2 14C2 6 7 2 12 2s8 4 8 10v2H8c0 4 7 5 11 2v5c-7 3-17 1-17-7zM8 10h7c0-4-6-4-7 0z" fill="#0f7fdc"/></svg></span>
    <span class="ts"><svg class="t3" viewBox="0 0 26 28"><path d="M6 15h14c0-8-14-8-14 0s10 10 15 5" fill="none" stroke="#3da0ea" stroke-width="4"/><path d="M2 27C-2 22 12 4 25 1c2 3-1 7-3 10M2 27c3 2 7-1 10-2" fill="none" stroke="#ecc63a" stroke-width="1.500"/></svg></span>
    <span class="ts"><svg class="t3" viewBox="0 0 24 22"><path d="M1 20V4h8l2 2h12v14z" fill="#fbd65a"/><path d="M1 8h22v12H1z" fill="#fce28c"/><path d="M8 20v-8h8v8h-3v-5h-2v5z" fill="#3fa3dc"/></svg></span>
    <span class="ts"><svg class="t3" viewBox="0 0 24 26"><circle cx="12" cy="13" r="10" fill="#8fd05a" stroke="#eee" stroke-width="2"/><path d="M6 13h12M17 17a6 6 0 1 1 1-5" stroke="#fff" stroke-width="2.500" fill="none"/><path d="M16 2c4 0 6 3 6 4M2 24c2-1 3-3 3-3" stroke="#3a9a3a" stroke-width="1.500" fill="none"/></svg></span>
    <span class="ts"><svg class="t3" viewBox="0 0 24 26"><path d="M20 2c-9-1-17 5-17 13 0 6 4 10 9 10s9-4 8-9-5-5-8-4l1 4c2-1 3 0 3 2s-2 3-4 2-3-4-2-7 4-6 7-6z" fill="#1f8ae6"/></svg></span>
    <span class="ts"><svg class="t3" viewBox="0 0 24 28"><rect x="0" y="0" width="24" height="28" rx="2" fill="#ee8c1c"/><path d="M3 5l15-2 3 20-15 2z" fill="#fdf2c0"/><path d="M6 9l10-1M6 13l8-1M7 17l7-1" stroke="#b08030"/><path d="M20 5L10 20l-2 2 1-4L18 3z" fill="#8a5a20"/></svg></span>
    <span class="ts act"><svg class="t3" viewBox="0 0 16 16"><use href="#app"/></svg></span>
    <div class="tray">
      <span class="tl">链接</span>
      <span class="cpu"><span>33%</span><span>CPU使用</span></span>
      <svg class="sy w12" viewBox="0 0 12 8"><path d="M.5 7.500L6 1.500l5.500 6" fill="none" stroke="#fff" stroke-width="1.200"/></svg>
      <svg class="sy w14" viewBox="0 0 14 16"><path d="M7 0c3 0 4 3 4 6l2 5H1l2-5c0-3 1-6 4-6z" fill="#fff"/><rect x="0" y="12" width="14" height="1.500" fill="#fff"/><path d="M5 14.500h4L7 16z" fill="#fff"/></svg>
      <svg class="sy w16" viewBox="0 0 16 16"><path d="M1 5h3v-4M5 5V1" stroke="#fff" fill="none"/><rect x="1" y="5" width="5" height="4" fill="#fff"/><rect x="5" y="7" width="10" height="8" fill="#666" stroke="#fff"/><rect x="6" y="8" width="6" height="6" fill="#fff"/></svg>
      <svg class="sy w16" viewBox="0 0 16 16"><g fill="none" stroke="#bbb" stroke-width="1.200"><path d="M1 14C1 7 7 2 14 2"/><path d="M4 14c0-5 4-8 9-8"/><path d="M7 14c0-3 2-5 6-5"/></g><circle cx="3" cy="14" r="1.200" fill="#fff"/><path d="M9 14h5M11 11h3" stroke="#ccc"/></svg>
      <svg class="sy w16" viewBox="0 0 16 16"><path d="M1 6h3l4-4v12l-4-4H1z" fill="none" stroke="#fff"/><path d="M10 5c1.500 2 1.500 4 0 6M12 3c2.500 3 2.500 7 0 10" fill="none" stroke="#bbb"/></svg>
      <svg class="sy w24" viewBox="0 0 24 16"><rect x=".5" y="1" width="23" height="14" fill="none" stroke="#fff"/><path d="M3 4h18M3 7h18M3 10h18" stroke="#fff" stroke-dasharray="1.500 1"/><path d="M6 12.500h12" stroke="#fff"/></svg>
      <span class="tl zh">中</span>
      <svg class="sy w16" viewBox="0 0 16 18"><path d="M2 1l13-1 1 14-14 4z" fill="#ee5a20"/><path d="M12 4.500H6a1.500 1.500 0 0 0 0 3.500h4a1.800 1.800 0 0 1 0 3.500H4" fill="none" stroke="#fff" stroke-width="2"/></svg>
      <span class="clock"><span>8:48</span><span>2018/7/22</span></span>
      <svg class="sy w16 nt2" viewBox="0 0 16 16"><path d="M.5.500h15v11H11l-3 4v-4H.5z" fill="none" stroke="#fff"/></svg>
    </div>
  </div>
</div>
</body>
</html>
```
FILE: styles.css
```css
*{box-sizing:border-box}
html,body{margin:0;padding:0}
body{width:1366px;height:768px;overflow:hidden;background:#f0f0f0;font:12px/16px "Liberation Sans","Noto Sans CJK SC",sans-serif;color:#111}
ul{list-style:none;margin:0;padding:0}
i,em{font-style:normal}
.defs{position:absolute;width:0;height:0}
.app{width:1366px;height:768px;display:flex;flex-direction:column;position:relative}

/* title */
.titlebar{height:23px;background:#fff;display:flex;align-items:center;padding-left:2px}
.appicon{width:15px;height:16px;flex:none}
.title{margin-left:6px;font-family:"Noto Sans","Noto Sans CJK SC",sans-serif;font-size:12.530px;white-space:nowrap;color:#222}
.winbtns{margin-left:auto;display:flex;align-items:center;gap:30px;padding-right:23px}
.wb{width:12px;height:12px;display:block}
.ime{position:absolute;left:970px;top:3px;width:205px;height:24px;background:#fff;border:1px solid #a9bccd;display:flex;align-items:center;padding-left:32px;gap:6px;z-index:3}
.imes{position:absolute;left:-1px;top:-4px;width:28px;height:29px}
.imez{color:#1f7ac8;font:bold 14px/16px "Noto Sans CJK SC",sans-serif;width:15px}
.imei{width:16px;height:16px;flex:none}
.imei.p1{width:12px;margin:0 4px 0 2px}

/* menu */
.menubar{height:30px;display:flex;align-items:center;background:#f4f4f4;padding-left:7px;flex:none}
.mi{margin-right:9px;white-space:nowrap}
.mi:nth-child(4){margin-right:11px}
.mi:nth-child(5){margin-right:10px}
.mi:nth-child(6){margin-right:12px}
.mi:nth-child(7),.mi:nth-child(8){margin-right:11px}
.mi:nth-child(9){margin-right:8px}
.mi:nth-child(10){margin-right:10px}
.mi:nth-child(11){margin-right:14px}
.mi:nth-child(12){margin-right:8px}
.mi:nth-child(13){margin-right:12px}
.mi:nth-child(14){margin-right:7px}
.news{margin-left:-1px}
.guang{margin-left:8px}
.cadtip{margin-left:8px;width:188px;height:28px;background:#f9f9f9;color:#5a7000;line-height:28px;padding-left:29px;white-space:nowrap}
.user{margin-left:5px;gap:5px!important}
.phone{letter-spacing:.2px}
.user .ar{margin-left:3px}
.bean{margin-left:9px}
.bell{width:12px;height:18px;margin-left:10px}
.more{font:bold 12px/12px "DejaVu Sans",sans-serif;color:#222;white-space:nowrap}
.menubar .more{margin-left:auto;margin-right:2px;margin-top:-8px}

/* toolbars */
.tb1{height:30px;display:flex;flex:none;align-items:stretch;background:#f0f0f0}
.grp{background:#f9f9f9;display:flex;align-items:center;border-radius:2px;white-space:nowrap}
.g1{width:151px;padding-left:5px;gap:0;position:relative}
.g1 .i{margin-right:5px}
.g1 .ar{margin:0 9px 0 3px}
.g1 .sep{height:24px;margin:0 8px 0 2px}
.m1{margin-left:4px;margin-top:-8px}
.g2{width:548px;margin-left:3px;padding-left:3px;gap:7px}
.m2{margin-left:auto;margin-right:2px;margin-top:-8px}
.g3{width:662px;margin-left:2px;padding-left:4px;gap:7.600px}
.g3 .sep{margin:0 -1px}
.m3{margin-left:auto;margin-right:2px;margin-top:-8px}
.ti{display:inline-flex;align-items:center;gap:4px;height:24px;white-space:nowrap;flex:none}
.i{width:16px;height:16px;flex:none;display:block}
.ii{width:18px}
.d{color:#9d9d9d}
.sigma{font:bold 15px/16px "DejaVu Serif",serif;color:#111}
.ar{display:inline-block;width:0;height:0;border:3px solid transparent;border-top:4px solid #333;border-bottom:0;margin-left:1px;flex:none}
.d .ar{border-top-color:#999}
.sep{width:1px;height:20px;background:#c8c8c8;margin:0 -2px;flex:none;display:block}
.gr{width:3px;height:18px;flex:none;display:block;background:radial-gradient(circle,#aaa 1px,transparent 1.200px) 0 0/3px 4px}
.on{border:1px solid #1b86e0;background:#dcebf8;margin:0 -4px;padding:0 1px 0 3px;height:24px}
.strong{background:#b4d6f3}
.tb{height:27px;padding-left:3px}
.back1{margin-left:-1px}
.back2{margin-left:-2px}
.back3{margin-left:-3px}
.back4{margin-left:-4px}
.workspace{flex:1;display:flex;min-height:0}
.main{width:1149px;margin-left:4px;display:flex;flex-direction:column;flex:none}
.tb2{width:791px;gap:8px;flex:none;height:26px;margin-bottom:2px;color:#999;padding-top:4px}
.tb2 .gr{margin-right:-5px}
.tbrow{display:flex;flex:none;height:28px;gap:2px}
.g31{width:639px;padding-left:3px;gap:7.700px}
.g32{width:422px;padding-left:5px;gap:7.500px}
.g31 .gr{margin-right:-4px}
.g32 .gr{margin-right:-5px}
.combo{height:22px;width:68px;background:#fff;display:inline-flex;align-items:center;justify-content:space-between;padding:0 5px 0 2px;flex:none;margin-right:-4.700px}
.combo .ar{margin-left:0}
.c1{width:57px}
.g31 .combo:last-of-type{margin-right:0}
.g31 .sep{margin:0 3px 0 0}
.g41{width:714px;gap:8px;padding-left:3px}
.g42{width:33px;margin-left:4px;padding-left:2px;gap:2px}
.g42 .gr{flex:none}
.blank{width:24px;height:26px;background:#fff;display:block}
.g41 .gr{margin-right:-4px}
.g41 .sep{margin:0 -1px}
.g41 .sb{margin:0 -8px 0 3px}
.g41 .sc1{margin:0 -4px 0 0}
.g41 .sd{margin:0 -3px 0 -4px}
.s2{margin-left:3px;gap:1px}
.c3{width:56px;height:23px;background:#f0f0f0;border:1px solid #8a8a8a;justify-content:flex-end;margin:0 -3px;padding-right:3px}
.rect{background:#ececec;border:1px solid #ccc;height:14px;width:14px;margin-right:2px}

/* canvas */
.canvas{height:305px;background:#000;position:relative;overflow:hidden;flex:none}
.scene{width:1149px;height:305px;display:block;shape-rendering:crispEdges}
.red path,path.red{fill:none;stroke:#ff0000;stroke-width:1}
.cir ellipse{fill:none;stroke:#8a8a8a;stroke-width:1;shape-rendering:auto}
.rebar path{fill:none;stroke:#a8a4a0;stroke-width:1}
.rebar.thick path{stroke:#8d8d8d;stroke-width:2}
.axis3{font:bold 11px "Liberation Sans",sans-serif;fill:#ddd;text-anchor:middle}
.ax{font:11px "Liberation Sans",sans-serif}
.axz{fill:#1484f0;font-size:14px}.axy{fill:#18c018;font-size:12px}.axx{fill:#d02020;font-size:12px}
.panel{position:absolute;left:10px;top:2px;width:167px;height:179px;background:#fff;border:1px solid #808080;padding:1px}
.paneltitle{height:31px;line-height:28px;padding-left:6px;color:#aaa}
.panellist{height:146px;border:solid #8c8c8c;border-width:1px 2px 2px 1px;padding:2px 0 0 3px;color:#000}
.panellist li{height:12px;line-height:12px;display:flex;align-items:center;font-size:12px;white-space:nowrap}
.cb{width:11px;height:11px;margin-right:4px;flex:none}

/* snap bar */
.r5{height:31px;padding:1px 0 2px;gap:3px}
.r5 .tb{height:28px;padding-top:3px}
.g51{width:210px;padding-left:4px;gap:7.700px}
.g51 .gr{margin-right:-4px}
.r5 .on{height:23px}
.g52{width:261px;padding-left:1px;gap:7.700px}
.g52 .gr{margin-right:-2.700px}
.pnt{margin:0 -4px;padding:0 3px 0 2px;width:51px}
.pnt + .pnt{margin-left:-3.700px}
.g53{width:410px;padding-left:3px;gap:3px}
.g53 .gr{margin-right:-1px}
.c4{width:58px;margin-right:1px}
.g53 .sep{margin:0}
.g53 .mm{width:22px}
.g53 .mm + .sep{margin-left:-2px}
.lb{white-space:nowrap}
.spin{width:58px;height:22px;border:1px solid #8c8c8c;display:flex;align-items:center;justify-content:flex-end;gap:4px;color:#777;padding-right:2px}
.wide{width:68px}
.sp{width:8px;height:16px;display:block;background:linear-gradient(#444,#444) 3px 3px/2px 1px no-repeat,linear-gradient(#444,#444) 2px 4px/4px 1px no-repeat,linear-gradient(#777,#777) 2px 11px/4px 1px no-repeat,linear-gradient(#777,#777) 3px 12px/2px 1px no-repeat}
.box{width:11px;height:11px;border:1px solid #777;background:#fff;display:block;margin-left:1px}
.rotl{margin:0 2px 0 6px}

/* rebar toolbar */
.rebar-tb{display:flex;flex:none;height:29px;padding-top:4px}
.x-strip{width:14px;padding:8px 0 0 1px;flex:none}
.xs{width:10px;height:10px;display:block}
.g6{width:1135px;height:25px;padding-left:4px;gap:8px}
.pg{width:12px;height:14px;flex:none;margin-right:4px}
.g6 .s61{margin:0 -1px 0 -5px}
.g6 .s62{margin:0 -3px 0 -4px}
.g6 .s63{margin:0 -2px 0 0}
.g6 .ti{height:22px}
.tight{gap:2px}
.total{font-family:"Noto Sans CJK SC",sans-serif}

/* table */
.gridarea{display:flex;flex:none;height:171px}
.dots{width:11px;flex:none;background:radial-gradient(circle,#bbb 1px,transparent 1.200px) 3px 0/4px 4px}
.gridbox{width:1137px;height:171px;border:1px solid #b0b0b0;background:#f0f0f0;display:grid;grid-template-columns:1117px 18px;grid-template-rows:154px 16px;flex:none}
.gridclip{overflow:hidden;height:154px;background:#fff}
.rt{table-layout:fixed;border-collapse:collapse;width:1117px}
.w34{width:34px}.w73{width:73px}.w56{width:56px}.w36{width:36px}.w33{width:33px}.w201{width:201px}.w166{width:166px}.w156{width:156px}.w61{width:61px}.w38{width:38px}.w39{width:39px}.w49{width:49px}.w53{width:53px}
.rt th,.rt td{border:1px solid #b4b4b4;padding:0 0 0 2px;font-weight:normal;overflow:hidden;white-space:nowrap}
.rt thead tr{height:20px}
.rt thead th{background:linear-gradient(#fafafa,#eee);text-align:center;padding:2px 0 0;border-top:0;line-height:16px}
.rt small{font:9px "DejaVu Sans Mono",monospace}
.rt .hsel{background:linear-gradient(#ffe0a8,#f6bf6c);color:#802000}
.rt .cut{text-align:left;padding-left:11px}
.cutin{width:41px;overflow:hidden}
.rt tbody tr{height:29px}
.rt tbody tr.empty{height:18px}
.rt tbody td{background:#caffd2}
.rt .empty td{background:#fff;border-bottom:0}
.rt .rn{background:linear-gradient(#fafafa,#eee);text-align:center;padding:0;font:10px "DejaVu Sans Mono",monospace}
.rt .rsel{background:#ffd28a;color:#6a0a8a}
.rt .m,.rt .nm .m{font:10px "DejaVu Sans Mono",monospace}
.rt .nm{white-space:normal;line-height:14px;padding:0 2px;word-break:break-all;border-right:1px solid #000}
.rt .cursel{background:#a9e8d4}
.rt .fx{font-family:"DejaVu Sans Mono","Noto Sans CJK SC",monospace}
.ct{text-align:center;padding:0!important}
.gr3{width:10px;height:12px;display:inline-block;vertical-align:middle}
.shape{text-align:center;padding:0!important;position:relative}
.shape span{display:block;width:150px;margin:-1px auto 0;height:15px;border-bottom:2px solid #000;color:#e00000;font:11px/13px "Liberation Sans",sans-serif}
.vs{position:relative;background:#f0f0f0;display:block}
.treevs{width:15px;flex:none;height:100%}
.gridvs{grid-column:2;grid-row:1 / 3;width:18px}
.vs .up,.vs .dn{position:absolute;left:50%;margin-left:-4px;width:8px;height:8px;border:solid #555;border-width:2px 0 0 2px;transform:rotate(45deg) scale(.7)}
.vs .up{top:7px}
.vs .dn{bottom:7px;transform:rotate(225deg) scale(.7)}
.treevs .up{top:10px}
.treevs .dn{bottom:5px}
.vs .thumb{position:absolute;left:0;right:0;background:#cdcdcd}
.treevs .thumb{top:48px;bottom:31px}
.gridvs .thumb{top:18px;height:59px;left:1px;right:1px}
.hs{grid-column:1;grid-row:2;position:relative;background:#f0f0f0}
.hs .lf,.hs .rg{position:absolute;top:4px;width:8px;height:8px;border:solid #555;border-width:2px 0 0 2px;transform:rotate(-45deg) scale(.7)}
.hs .lf{left:8px}
.hs .rg{right:5px;transform:rotate(135deg) scale(.7)}
.hs .thumb{position:absolute;left:18px;width:718px;top:0;bottom:0;background:#cdcdcd}

/* navigation */
.nav{width:213px;flex:none;display:flex;flex-direction:column;padding-bottom:3px}
.navhead{height:16px;background:#0a50e0;color:#fff;display:flex;align-items:center;padding-right:5px;flex:none}
.navtitle{margin-right:auto;letter-spacing:.6px}
.navbtn{width:11px;height:11px;margin-left:7px}
.navb{height:22px;flex:none;width:212px;border:1px solid #a8a8a8;border-top-color:#e0e0e0;background:#f0f0f0;font:12px/20px "Noto Sans CJK SC",sans-serif;color:#111;padding:0;margin:0}
.nt{padding-top:2px}
.n2{margin-top:1px}
.treebox{flex:1;min-height:0;border:2px solid #a4a4a4;background:#fff;margin:0 2px 0 1px;display:flex;flex-direction:column;overflow:hidden}
.treetools{height:23px;display:flex;align-items:flex-start;padding:3px 0 0 5px;gap:4px;flex:none}
.tt{width:18px;height:16px}
.treebody{flex:1;display:flex;min-height:0;overflow:hidden}
.tree{flex:1;overflow:hidden;padding-top:6px;font-size:12px;height:100%;background:linear-gradient(#666 50%,transparent 50%) 12px 0/1px 2px no-repeat}
.tree li{height:16px;line-height:16px;position:relative;white-space:nowrap;display:flex;align-items:center}
.tree b{font:10px "DejaVu Sans Mono",monospace}
.ti16{width:16px;height:16px;flex:none}
.tree .c{padding-left:43px;background:linear-gradient(#666 50%,transparent 50%) 12px 0/1px 2px repeat-y,linear-gradient(#666 50%,transparent 50%) 33px 0/1px 2px repeat-y}
.tree .c.last{background:linear-gradient(#666 50%,transparent 50%) 12px 0/1px 2px repeat-y,linear-gradient(#666 50%,transparent 50%) 33px 0/1px 8px no-repeat}
.tree .c::before{content:"";position:absolute;left:34px;top:8px;width:9px;height:1px;background:linear-gradient(90deg,#666 50%,transparent 50%) 0 0/2px 1px}
.tree .c .ti16{margin-right:4px}
.tree .r{padding-left:24px}
.tree .r .ti16{margin-right:5px}
.chev{position:absolute;left:7px;top:4px;width:7px;height:7px;border:solid #a8a8a8;border-width:2px 2px 0 0;transform:rotate(45deg)}
.o .chev{border-color:#555;transform:rotate(135deg);left:8px;top:2px}
.mini{display:block;width:14px;height:12px;flex:none;margin-left:4px}
.mb{background:#5fa5e8;margin-left:6px}
.my{background:#f2c020;width:22px}
.sel .ti16{background:#d8d8d8;margin-right:0!important}
.st{background:#d9d9d9;height:16px;padding:0 6px 0 4px;display:block}

/* status */
.status{height:20px;display:flex;gap:2px;flex:none;background:#f0f0f0}
.sc{height:20px;background:#f7f7f7;border:1px solid #ddd;font-size:12px;line-height:18px;padding-left:1px;white-space:nowrap;flex:none}
.sc em,.s1c,.s6c{font:10px/18px "DejaVu Sans Mono",monospace}
.s1c{width:148px}.s2c{width:78px}.s3c{width:98px}.s4c{width:48px}.s5c{width:914px}.s6c{width:70px}

/* taskbar */
.taskbar{height:40px;flex:none;display:flex;align-items:center;color:#ddd;background:linear-gradient(90deg,#03111a 1297px,#000 1297px)}
.start{width:48px;height:40px;background:#000;display:flex;align-items:center;justify-content:center;flex:none}
.win{width:16px;height:16px}
.search{width:344px;height:40px;background:#333;display:flex;align-items:center;padding-left:11px;flex:none}
.cortana{width:20px;height:20px;border-radius:50%;border:3px solid #ddd;display:block;flex:none}
.ph{margin-left:5px;font:14px/20px "Noto Sans CJK SC",sans-serif;color:#8a8a8a}
.mic{width:12px;height:18px;margin-left:auto;margin-right:15px}
.ts{width:45px;height:40px;display:flex;align-items:center;justify-content:center;flex:none;position:relative}
.tw{width:50px}
.t1{width:20px;height:18px}.t2{width:22px;height:24px}.t3{width:24px;height:26px}
.ts:nth-of-type(n+8)::after{content:"";position:absolute;left:4px;right:4px;bottom:0;height:2px;background:#6fb4ec}
.act{background:#3b4750;width:43px}
.act::after{left:0!important;right:0!important}
.tray{flex:1;display:grid;grid-template-columns:50px 68px 26px 22px 27px 25px 21px 33px 24px 32px 77px 35px;align-items:center;justify-items:center;height:40px}
.tl{font:12px/16px "Noto Sans CJK SC",sans-serif;color:#ddd}
.zh{font-size:14px;color:#fff}
.cpu,.clock{display:flex;flex-direction:column;align-items:center;font:13px/18px "Noto Sans CJK SC",sans-serif;color:#ddd;white-space:nowrap}
.sy{display:block}
.w12{width:12px;height:8px}.w14{width:14px;height:16px}.w16{width:16px;height:16px}.w24{width:24px;height:16px}
```
